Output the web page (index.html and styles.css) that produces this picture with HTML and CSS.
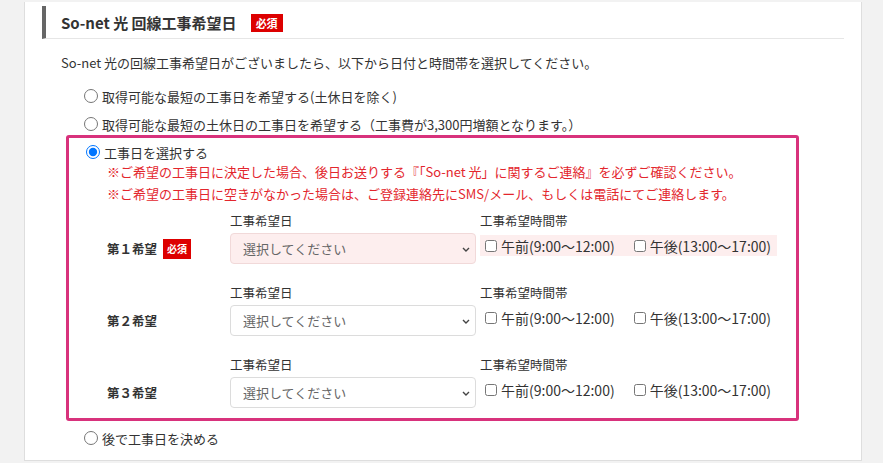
FILE: index.html
```html
<!DOCTYPE html>
<html lang="ja">
<head>
  <meta charset="UTF-8" />
  <title>So-net 光 回線工事希望日</title>
  <meta name="viewport" content="width=device-width, initial-scale=1" />
  <link rel="stylesheet" href="styles.css">
</head>
<body>
  <div class="panel">
    <h2 class="heading">So-net 光 回線工事希望日 <span class="badge">必須</span></h2>
    <p class="lead">So-net 光の回線工事希望日がございましたら、以下から日付と時間帯を選択してください。</p>

    <label class="choice first"><input type="radio" name="when"> 取得可能な最短の工事日を希望する(土休日を除く)</label>
    <label class="choice"><input type="radio" name="when"> 取得可能な最短の土休日の工事日を希望する（工事費が3,300円増額となります。）</label>

    <div class="select-box">
      <label class="choice"><input type="radio" name="when" checked> 工事日を選択する</label>
      <p class="note first">※ご希望の工事日に決定した場合、後日お送りする『「So-net 光」に関するご連絡』を必ずご確認ください。</p>
      <p class="note">※ご希望の工事日に空きがなかった場合は、ご登録連絡先にSMS/メール、もしくは電話にてご連絡します。</p>

      <div class="wish-row">
        <div class="wish-name">第１希望 <span class="badge small">必須</span></div>
        <div class="field">
          <div class="field-label">工事希望日</div>
          <div class="select-wrap">
            <select class="date-select required"><option>選択してください</option></select>
            <svg class="chevron" width="8" height="5" viewBox="0 0 8 5"><path d="M1 1 L4 4 L7 1" fill="none" stroke="#444" stroke-width="1.4"/></svg>
          </div>
        </div>
        <div class="field">
          <div class="field-label">工事希望時間帯</div>
          <div class="times required">
            <label class="time"><input type="checkbox"> 午前(9:00～12:00)</label>
            <label class="time"><input type="checkbox"> 午後(13:00～17:00)</label>
          </div>
        </div>
      </div>

      <div class="wish-row">
        <div class="wish-name">第２希望</div>
        <div class="field">
          <div class="field-label">工事希望日</div>
          <div class="select-wrap">
            <select class="date-select"><option>選択してください</option></select>
            <svg class="chevron" width="8" height="5" viewBox="0 0 8 5"><path d="M1 1 L4 4 L7 1" fill="none" stroke="#444" stroke-width="1.4"/></svg>
          </div>
        </div>
        <div class="field">
          <div class="field-label">工事希望時間帯</div>
          <div class="times">
            <label class="time"><input type="checkbox"> 午前(9:00～12:00)</label>
            <label class="time"><input type="checkbox"> 午後(13:00～17:00)</label>
          </div>
        </div>
      </div>

      <div class="wish-row">
        <div class="wish-name">第３希望</div>
        <div class="field">
          <div class="field-label">工事希望日</div>
          <div class="select-wrap">
            <select class="date-select"><option>選択してください</option></select>
            <svg class="chevron" width="8" height="5" viewBox="0 0 8 5"><path d="M1 1 L4 4 L7 1" fill="none" stroke="#444" stroke-width="1.4"/></svg>
          </div>
        </div>
        <div class="field">
          <div class="field-label">工事希望時間帯</div>
          <div class="times">
            <label class="time"><input type="checkbox"> 午前(9:00～12:00)</label>
            <label class="time"><input type="checkbox"> 午後(13:00～17:00)</label>
          </div>
        </div>
      </div>
    </div>

    <label class="choice last"><input type="radio" name="when"> 後で工事日を決める</label>
  </div>
</body>
</html>
```

FILE: styles.css
```css
body {
  font-family: "Noto Sans CJK JP", "Noto Sans", sans-serif;
  margin: 0;
  background: #f2f2f2;
  color: #333;
  font-size: 13px;
}
.panel {
  margin: 2px 0 0 24px;
  width: 838px;
  height: 459px;
  background: white;
  border-left: 1px solid #dedede;
  border-right: 1px solid #dedede;
  border-bottom: 1px solid #dedede;
  padding: 4px 0 0 0;
  box-sizing: border-box;
}
.heading {
  margin: 0 17px 0 17px;
  height: 33px;
  border-left: 4px solid #666;
  border-bottom: 1px solid #e6e6e6;
  padding-left: 15px;
  font-size: 15px;
  font-weight: bold;
  display: flex;
  align-items: center;
  gap: 14px;
  box-sizing: border-box;
  padding-top: 1px;
}
.badge {
  display: inline-block;
  background: #dd0000;
  color: white;
  font-size: 11px;
  font-weight: bold;
  line-height: 18px;
  padding: 0 5px;
}
.badge.small {
  font-size: 10px;
  line-height: 20px;
  padding: 0 4px;
  margin-left: 6px;
}
.lead {
  margin: 13px 0 0 36px;
  line-height: 22px;
}
.choice {
  display: flex;
  align-items: center;
  margin-left: 56px;
  height: 28px;
}
.choice.first {
  margin-top: 8px;
}
.choice.last {
  margin-top: 3px;
}
.choice input {
  margin: 0 4px 0 3px;
  width: 14px;
  height: 14px;
}
.select-box {
  margin: -3px 0 0 41px;
  width: 733px;
  height: 286px;
  border: 3px solid #d8327c;
  border-radius: 3px;
  box-sizing: border-box;
  padding: 3px 0 0 0;
}
.select-box .choice {
  margin: 0 0 0 14px;
  height: 22px;
}
.note {
  margin: 0 0 0 38px;
  color: #e3262d;
  font-size: 13px;
  line-height: 22px;
}
.note.first {
  margin-top: -2px;
}
.wish-row {
  display: flex;
  align-items: flex-start;
  margin-left: 38px;
  margin-top: 6px;
}
.wish-row + .wish-row {
  margin-top: 19px;
}
.wish-name {
  width: 123px;
  height: 31px;
  margin-top: 22px;
  display: flex;
  align-items: center;
  font-size: 12.5px;
  font-weight: bold;
}
.field-label {
  font-size: 12.5px;
  line-height: 20px;
  margin-bottom: 2px;
}
.select-wrap {
  position: relative;
  margin-right: 4px;
}
.date-select {
  display: block;
  appearance: none;
  width: 246px;
  height: 31px;
  border: 1px solid #dcdcdc;
  border-radius: 4px;
  background: white;
  color: #666;
  font-family: inherit;
  font-size: 13px;
  padding: 0 12px;
  margin: 0;
}
.date-select.required {
  background: #fdeeee;
  border-color: #f1d9d9;
}
.chevron {
  position: absolute;
  right: 6px;
  top: 14px;
}
.times {
  display: flex;
  align-items: center;
  width: 295px;
  height: 21px;
  margin-top: 4px;
  gap: 16px;
  padding-left: 2px;
}
.times.required {
  background: #fdeeee;
}
.time {
  display: flex;
  align-items: center;
  font-size: 14px;
}
.time input {
  margin: 0 4px 0 3px;
  width: 12px;
  height: 12px;
}
```
